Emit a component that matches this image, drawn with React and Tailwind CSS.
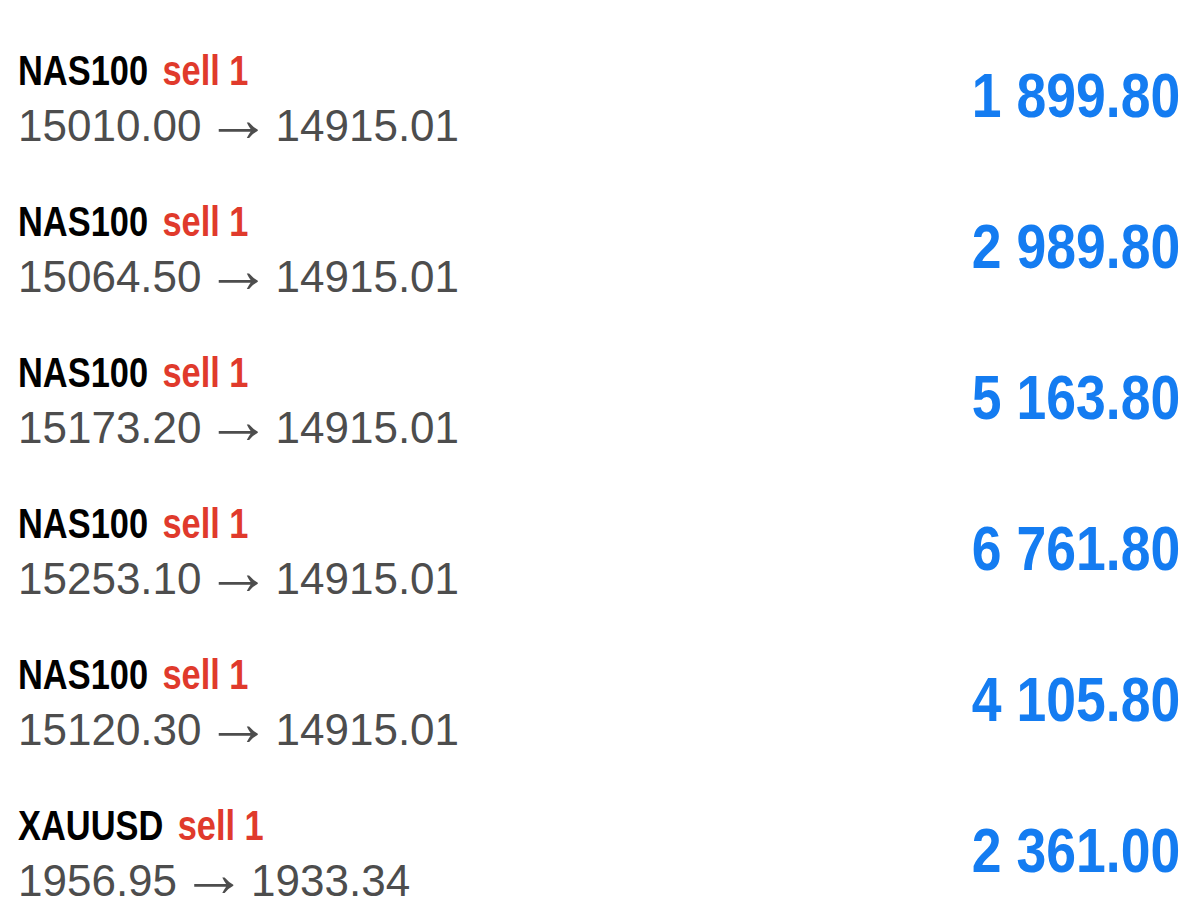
import React from 'react';

const trades = [
    { symbol: 'NAS100', open: '15010.00', close: '14915.01', profit: '1 899.80' },
    { symbol: 'NAS100', open: '15064.50', close: '14915.01', profit: '2 989.80' },
    { symbol: 'NAS100', open: '15173.20', close: '14915.01', profit: '5 163.80' },
    { symbol: 'NAS100', open: '15253.10', close: '14915.01', profit: '6 761.80' },
    { symbol: 'NAS100', open: '15120.30', close: '14915.01', profit: '4 105.80' },
    { symbol: 'XAUUSD', open: '1956.95', close: '1933.34', profit: '2 361.00' },
];

export default function App() {
    return (
        <div className="w-[1200px] h-[909px] overflow-hidden bg-white pt-[20px] font-['Liberation_Sans',sans-serif]">
            {trades.map((t, i) => (
                <div key={i} className="h-[151px] flex items-center justify-between pl-[18px] pr-[20px]">
                    <div>
                        {/* condensed bold header */}
                        <div className="h-[55px] text-[43px] leading-[59px] font-bold whitespace-nowrap">
                            <span className="inline-block scale-x-80 origin-left">
                                <span className="text-black">{t.symbol}</span>
                                <span className="text-[#e03a2c] ml-[18px]">sell 1</span>
                            </span>
                        </div>
                        <div className="h-[55px] text-[44px] leading-[59px] text-[#4d4d4d] whitespace-nowrap">
                            {t.open}
                            <span className="text-[66px] leading-[40px] mx-[4px] font-light">→</span>
                            {t.close}
                        </div>
                    </div>
                    <div className="text-[63px] leading-none font-bold text-[#147cf1] whitespace-nowrap">
                        <span className="inline-block scale-x-[0.85] origin-right">{t.profit}</span>
                    </div>
                </div>
            ))}
        </div>
    );
}
